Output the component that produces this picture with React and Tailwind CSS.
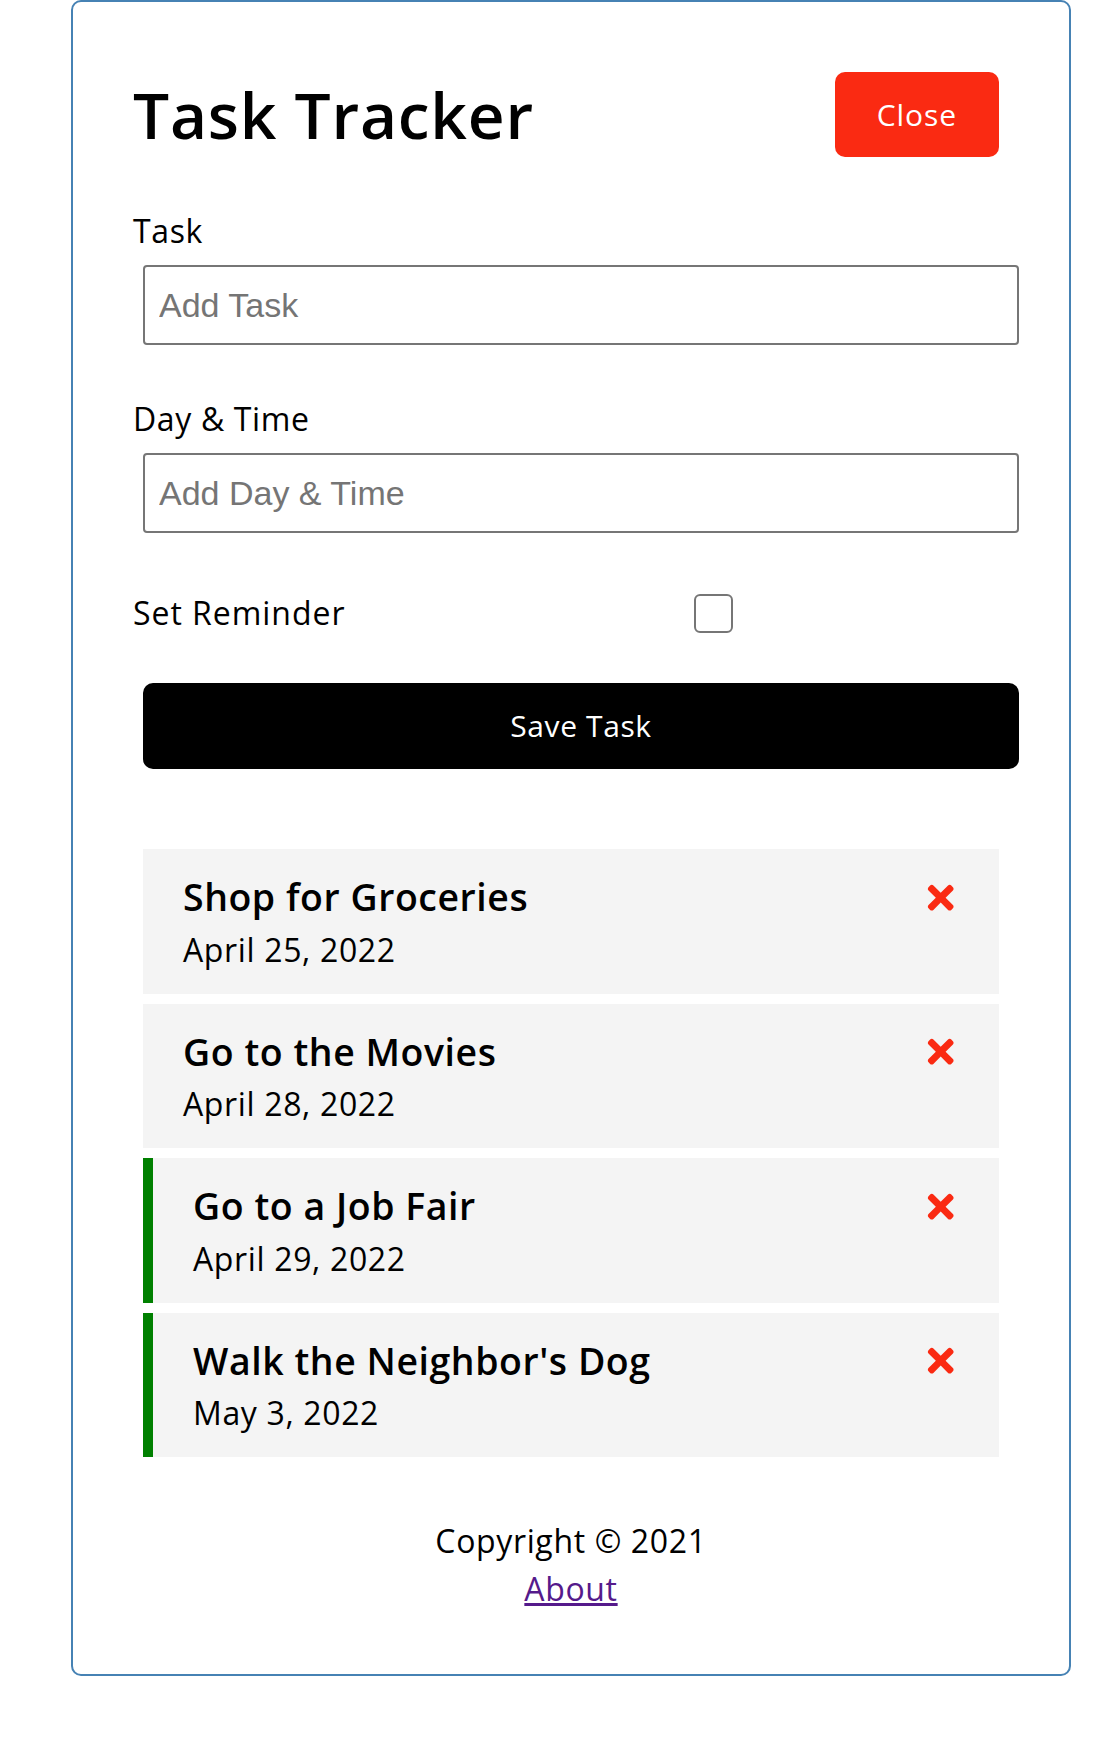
import React from "react";
import { FaTimes } from "react-icons/fa";

const tasks = [
  { id: 1, text: "Shop for Groceries", day: "April 25, 2022", reminder: false },
  { id: 2, text: "Go to the Movies", day: "April 28, 2022", reminder: false },
  { id: 3, text: "Go to a Job Fair", day: "April 29, 2022", reminder: true },
  { id: 4, text: "Walk the Neighbor's Dog", day: "May 3, 2022", reminder: true },
];

function Task({ task }) {
  return (
    <div
      className={
        task.reminder
          ? "m-[10px] bg-[#f4f4f4] px-[40px] py-[20px] border-l-[10px] border-[#008000]"
          : "m-[10px] bg-[#f4f4f4] px-[40px] py-[20px]"
      }
    >
      <h3 className="flex items-center justify-between text-[37.44px] leading-[56.5px] font-semibold tracking-[0.015em] text-black">
        {task.text}
        <FaTimes className="text-[#fa2a12]" />
      </h3>
      <p className="text-[32px] leading-[48px] tracking-[0.02em] text-black">{task.day}</p>
    </div>
  );
}

export default function App() {
  return (
    <div className="min-h-[1740px] bg-white font-['Open_Sans',sans-serif] text-black">
      <div className="ml-[71px] w-[1000px] rounded-[10px] border-2 border-[#4682b4] px-[60px] pt-[60px] pb-[61px]">
        <header className="mb-[40px] flex items-center justify-between">
          <h1 className="text-[64px] leading-[96px] font-semibold tracking-[0.012em]">Task Tracker</h1>
          <button className="m-[10px] rounded-[10px] bg-[#fa2a12] px-[42px] py-[20px] text-[30px] leading-[45px] tracking-[0.03em] text-white">
            Close
          </button>
        </header>

        <form className="mb-[80px]" onSubmit={(e) => e.preventDefault()}>
          <div className="my-[40px]">
            <label className="block text-[32px] leading-[48px] tracking-[0.02em]">Task</label>
            <input
              type="text"
              placeholder="Add Task"
              className="m-[10px] h-[80px] w-full rounded-[4px] border-2 border-[#767676] px-[14px] py-[6px] font-['Liberation_Sans',Arial,sans-serif] text-[34px] placeholder:text-[#757575]"
            />
          </div>
          <div className="my-[40px]">
            <label className="block text-[32px] leading-[48px] tracking-[0.02em]">Day &amp; Time</label>
            <input
              type="text"
              placeholder="Add Day & Time"
              className="m-[10px] h-[80px] w-full rounded-[4px] border-2 border-[#767676] px-[14px] py-[6px] font-['Liberation_Sans',Arial,sans-serif] text-[34px] placeholder:text-[#757575]"
            />
          </div>
          <div className="my-[40px] flex items-center justify-between">
            <label className="flex-1 text-[32px] leading-[48px] tracking-[0.03em]">Set Reminder</label>
            <div className="m-[10px] flex h-[40px] flex-[2] items-center justify-center">
              <input
                type="checkbox"
                className="h-[39px] w-[39px] appearance-none rounded-[6px] border-2 border-[#767676] bg-white"
              />
            </div>
          </div>
          <button
            type="submit"
            className="m-[10px] block h-[86px] w-full rounded-[10px] bg-black px-[40px] text-[30px] leading-[44px] tracking-[0.02em] text-white"
          >
            Save Task
          </button>
        </form>

        <div>
          {tasks.map((t) => (
            <Task key={t.id} task={t} />
          ))}
        </div>

        <footer className="mt-[60px] text-center">
          <p className="text-[32px] leading-[48px] tracking-[0.02em]">Copyright &copy; 2021</p>
          <a href="#about" className="text-[32px] leading-[48px] tracking-[0.02em] text-[#551a8b] underline">
            About
          </a>
        </footer>
      </div>
    </div>
  );
}
